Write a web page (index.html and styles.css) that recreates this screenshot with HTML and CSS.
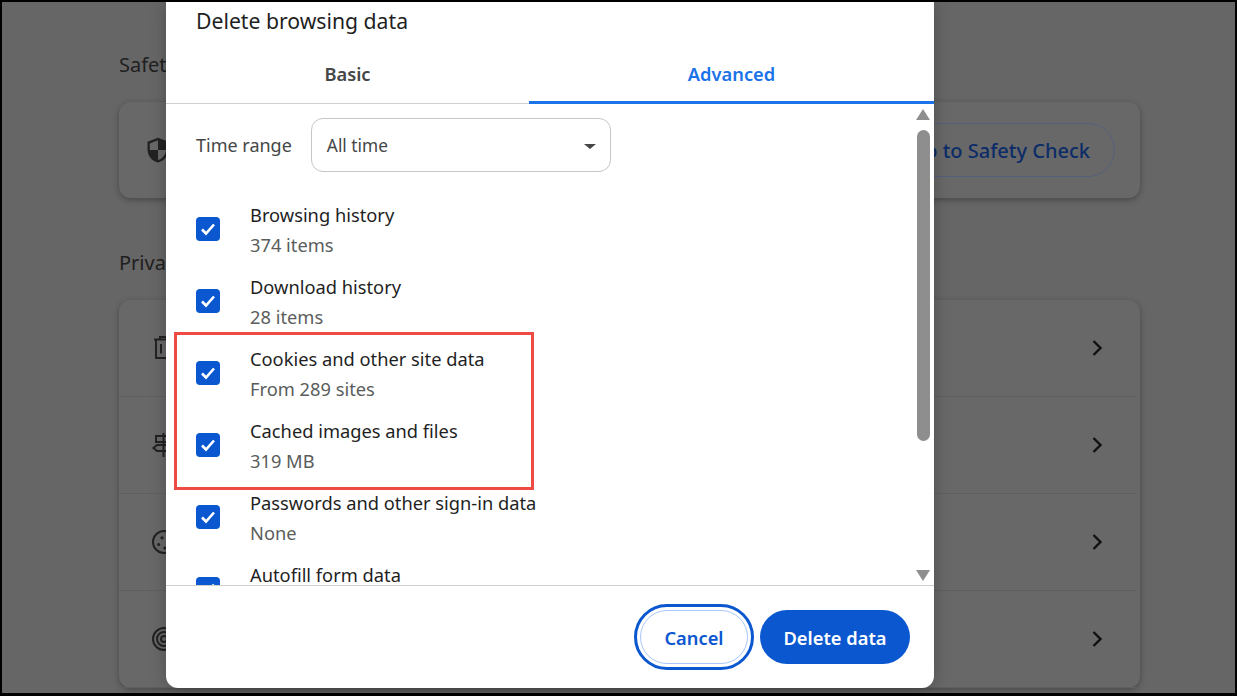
FILE: index.html
```html
<!DOCTYPE html>
<html lang="en">
<head>
  <meta charset="UTF-8" />
  <meta name="viewport" content="width=device-width, initial-scale=1.0"/>
  <title>Delete browsing data</title>
  <link rel="stylesheet" href="styles.css">
</head>
<body>

<div class="screen">
  <!-- settings page, dimmed behind the dialog -->
  <div class="settings">
    <h2 class="section-title">Safety check</h2>
    <div class="card safety">
      <svg class="row-icon shield" viewBox="0 0 24 24"><path d="M12 1.500 3 5v6.500c0 5.400 3.800 10 9 11.200 5.200-1.200 9-5.800 9-11.200V5l-9-3.500Zm0 2.200V12H5V6.400l7-2.700ZM12 12h7c-.4 4-3.200 7.600-7 8.600V12Z"/></svg>
      <button class="outline-btn">Go to Safety Check</button>
    </div>

    <h2 class="section-title privacy-title">Privacy and security</h2>
    <div class="card privacy">
      <div class="privacy-row">
        <svg class="row-icon" viewBox="0 0 24 24"><path class="line" d="M2 3.500h20M8 3.500V1h8v2.500M4 3.500V22h16V3.500M9 8v9.500M15 8v9.500"/></svg>
        <svg class="chevron" viewBox="0 0 24 24"><path d="m8.500 5 7 7-7 7"/></svg>
      </div>
      <div class="privacy-row">
        <svg class="row-icon" viewBox="0 0 24 24"><path class="line" d="M11.500 0v24M4 3h15l3 3-3 3H4ZM20 12H5l-3.500 3L5 18h15Z"/></svg>
        <svg class="chevron" viewBox="0 0 24 24"><path d="m8.500 5 7 7-7 7"/></svg>
      </div>
      <div class="privacy-row">
        <svg class="row-icon" viewBox="0 0 24 24"><circle class="line" cx="12" cy="12" r="11"/><circle cx="10" cy="7.800" r="1.600"/><circle cx="6.700" cy="14.500" r="1.600"/><circle cx="13" cy="18" r="1.600"/><circle cx="16" cy="12" r="1.200"/></svg>
        <svg class="chevron" viewBox="0 0 24 24"><path d="m8.500 5 7 7-7 7"/></svg>
      </div>
      <div class="privacy-row">
        <svg class="row-icon" viewBox="0 0 24 24"><circle class="line" cx="12" cy="12" r="11"/><circle class="line" cx="12" cy="12" r="7"/><circle class="line" cx="12" cy="12" r="3"/></svg>
        <svg class="chevron" viewBox="0 0 24 24"><path d="m8.500 5 7 7-7 7"/></svg>
      </div>
    </div>
  </div>

  <div class="dialog">
    <div class="dialog-title">Delete browsing data</div>
    <div class="tabs">
      <div class="tab">Basic</div>
      <div class="tab active">Advanced</div>
    </div>

    <div class="dialog-body">
      <div class="scroll-list">
        <div class="time-range">
          <span class="time-label">Time range</span>
          <div class="select">All time<span class="caret"></span></div>
        </div>

        <div class="check-row">
          <span class="checkbox"><svg viewBox="0 0 24 24"><path d="m6 12.500 4 4 8-9"/></svg></span>
          <div class="check-text"><div class="check-title">Browsing history</div><div class="check-sub">374 items</div></div>
        </div>
        <div class="check-row">
          <span class="checkbox"><svg viewBox="0 0 24 24"><path d="m6 12.500 4 4 8-9"/></svg></span>
          <div class="check-text"><div class="check-title">Download history</div><div class="check-sub">28 items</div></div>
        </div>
        <div class="check-row">
          <span class="checkbox"><svg viewBox="0 0 24 24"><path d="m6 12.500 4 4 8-9"/></svg></span>
          <div class="check-text"><div class="check-title">Cookies and other site data</div><div class="check-sub">From 289 sites</div></div>
        </div>
        <div class="check-row">
          <span class="checkbox"><svg viewBox="0 0 24 24"><path d="m6 12.500 4 4 8-9"/></svg></span>
          <div class="check-text"><div class="check-title">Cached images and files</div><div class="check-sub">319 MB</div></div>
        </div>
        <div class="check-row">
          <span class="checkbox"><svg viewBox="0 0 24 24"><path d="m6 12.500 4 4 8-9"/></svg></span>
          <div class="check-text"><div class="check-title">Passwords and other sign-in data</div><div class="check-sub">None</div></div>
        </div>
        <div class="check-row">
          <span class="checkbox"><svg viewBox="0 0 24 24"><path d="m6 12.500 4 4 8-9"/></svg></span>
          <div class="check-text"><div class="check-title">Autofill form data</div></div>
        </div>
      </div>

      <div class="scrollbar">
        <span class="arrow up"></span>
        <span class="thumb"></span>
        <span class="arrow down"></span>
      </div>
    </div>

    <div class="dialog-footer">
      <button class="btn cancel">Cancel</button>
      <button class="btn delete">Delete data</button>
    </div>

    <!-- annotation drawn on the screenshot -->
    <div class="highlight"></div>
  </div>
</div>

</body>
</html>
```

FILE: styles.css
```css
* {
  box-sizing: border-box;
}

body {
  margin: 0;
  font-family: "Noto Sans", "Open Sans", sans-serif;
}

.screen {
  position: relative;
  width: 1237px;
  height: 696px;
  overflow: hidden;
  background: #666;
  border: solid #000;
  border-width: 2px 2px 3px 2px;
}

/* background page */
.settings {
  padding: 0 95px 0 117px;
}

.section-title {
  margin: 0;
  padding-top: 47px;
  height: 100px;
  font-size: 20px;
  line-height: 32px;
  font-weight: 400;
  color: #202020;
}

.privacy-title {
  padding-top: 49px;
  height: 102px;
}

.card {
  background: #686868;
  border-radius: 12px;
  box-shadow: 0 2px 6px rgba(0, 0, 0, 0.3);
}

.safety {
  height: 96px;
  display: flex;
  align-items: center;
  justify-content: space-between;
  padding: 0 25px 0 25px;
}

.outline-btn {
  height: 54px;
  width: 240px;
  padding: 0 24px;
  border: 1px solid #54617c;
  border-radius: 27px;
  background: none;
  font-family: inherit;
  font-size: 20px;
  font-weight: 500;
  color: #0c2c68;
  white-space: nowrap;
  text-align: right;
}

.privacy-row {
  height: 97px;
  display: flex;
  align-items: center;
  justify-content: space-between;
  padding: 0 27px 0 33px;
  margin-right: 4px;
  border-bottom: 1px solid #5f5f5f;
}

.row-icon {
  width: 24px;
  height: 24px;
  fill: #222;
  overflow: visible;
}

.shield {
  width: 28px;
  height: 28px;
}

.row-icon .line {
  fill: none;
  stroke: #222;
  stroke-width: 2;
}

.chevron {
  width: 24px;
  height: 24px;
  fill: none;
  stroke: #111;
  stroke-width: 2.400;
}

/* dialog */
.dialog {
  position: absolute;
  left: 164px;
  top: 0;
  width: 768px;
  height: 686px;
  display: flex;
  flex-direction: column;
  background: #fff;
  border-radius: 0 0 12px 12px;
  box-shadow: 0 0 16px rgba(0, 0, 0, 0.25);
}

.dialog-title {
  height: 46px;
  padding: 4px 0 0 30px;
  font-size: 21.200px;
  line-height: 30px;
  color: #1f1f1f;
}

.tabs {
  display: grid;
  grid-template-columns: 363px 1fr;
  height: 56px;
  border-bottom: 1px solid #d0d0d0;
}

.tab {
  text-align: center;
  padding-top: 11px;
  font-size: 18.300px;
  line-height: 30px;
  font-weight: 600;
  color: #444746;
}

.tab.active {
  color: #1a73e8;
  border-bottom: 3px solid #1a73e8;
  height: 56px;
}

.dialog-body {
  height: 481px;
  display: flex;
  overflow: hidden;
}

.scroll-list {
  flex: 1;
  padding: 14px 0 0 30px;
}

.time-range {
  display: flex;
  align-items: center;
  gap: 19px;
  height: 54px;
  margin-bottom: 22px;
}

.time-label {
  font-size: 18px;
  color: #444746;
}

.select {
  position: relative;
  width: 300px;
  height: 54px;
  padding-left: 15px;
  border: 1px solid #c4c7c5;
  border-radius: 12px;
  font-size: 17.300px;
  line-height: 53px;
  color: #444746;
}

.caret {
  position: absolute;
  right: 14px;
  top: 25px;
  border: 6px solid transparent;
  border-bottom-width: 0;
  border-top: 5px solid #444746;
}

.check-row {
  display: flex;
  align-items: center;
  gap: 30px;
  height: 72px;
}

.checkbox {
  width: 24px;
  height: 24px;
  margin-top: -2px;
  flex-shrink: 0;
  border-radius: 4px;
  background: #0b57d0;
}

.checkbox svg {
  display: block;
  fill: none;
  stroke: #fff;
  stroke-width: 2.600;
}

.check-text {
  height: 60px;
}

.check-title {
  font-size: 18.300px;
  line-height: 30px;
  color: #1f1f1f;
}

.check-sub {
  font-size: 18.300px;
  line-height: 30px;
  color: #5a5d5c;
}

.scrollbar {
  width: 20px;
  margin-right: 1px;
  padding-top: 5px;
  display: flex;
  flex-direction: column;
  align-items: center;
}

.arrow {
  width: 0;
  height: 0;
  border: 7.500px solid transparent;
}

.arrow.up {
  border-top-width: 0;
  border-bottom: 11px solid #8e8e8e;
}

.thumb {
  width: 13px;
  height: 311px;
  margin-top: 10px;
  border-radius: 7px;
  background: #8e8e8e;
}

.arrow.down {
  margin-top: 129px;
  border-bottom-width: 0;
  border-top: 11px solid #8e8e8e;
}

.dialog-footer {
  flex: 1;
  display: flex;
  justify-content: flex-end;
  gap: 12px;
  padding: 24px 24px 0 0;
  border-top: 1px solid #d0d0d0;
}

.btn {
  height: 54px;
  border-radius: 27px;
  font-family: inherit;
  font-size: 18.300px;
  font-weight: 600;
}

.cancel {
  width: 108px;
  background: #fff;
  color: #0b57d0;
  border: 1px solid #a8c7fa;
  outline: 3px solid #0b57d0;
  outline-offset: 3px;
}

.delete {
  width: 150px;
  background: #0b57d0;
  color: #fff;
  border: none;
}

.highlight {
  position: absolute;
  left: 8px;
  top: 330px;
  width: 360px;
  height: 158px;
  border: 3px solid #ee4b44;
}
```
